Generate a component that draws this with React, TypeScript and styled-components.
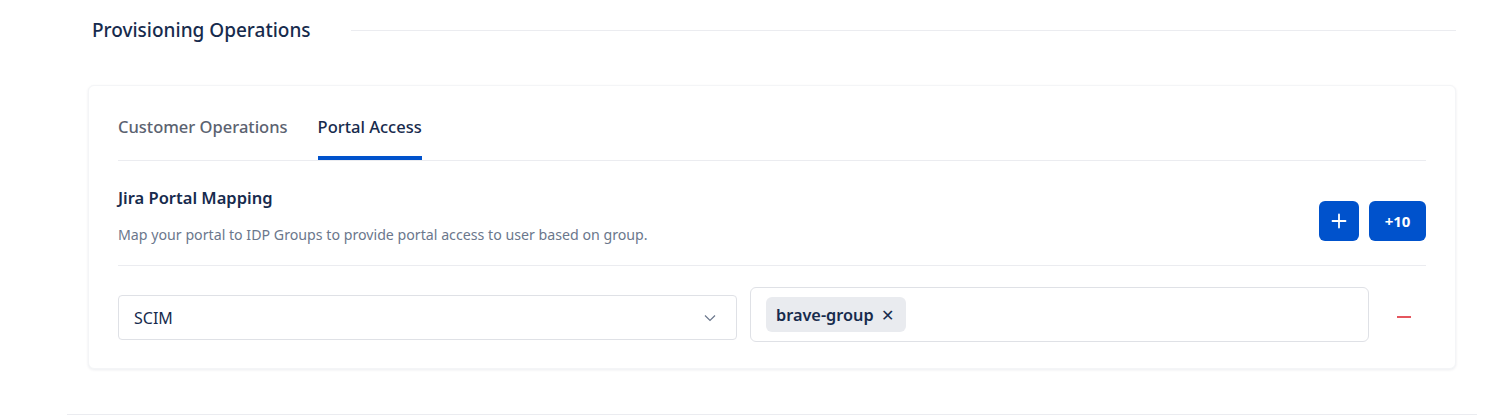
import React, { useState } from "react";
import styled, { createGlobalStyle } from "styled-components";

const Global = createGlobalStyle`
  html, body { margin: 0; padding: 0; background: #ffffff; }
  body { font-family: "Noto Sans", "Open Sans", sans-serif; color: #172b4d; }
  * { box-sizing: border-box; }
`;

const Page = styled.div`
  width: 1493px;
  height: 416px;
  padding: 0 16px 0 67px;
`;

const Section = styled.section`
  border-bottom: 1px solid #ebecf0;
  padding: 0 21px 45px;
`;

const HeadingRow = styled.div`
  display: flex;
  align-items: center;
  gap: 40px;
  height: 60px;
  padding-left: 4px;
  margin-bottom: 25px;
`;

const Heading = styled.h2`
  margin: 0;
  font-size: 19px;
  font-weight: 500;
  color: #172b4d;
  white-space: nowrap;
`;

const HeadingLine = styled.div`
  flex: 1;
  height: 1px;
  background: #ebecf0;
`;

const Card = styled.div`
  border: 1px solid #f4f5f7;
  border-radius: 6px;
  box-shadow: 0 1px 3px rgba(9, 30, 66, 0.08);
  padding: 20px 29px 26px;
  background: #fff;
`;

const TabList = styled.div`
  display: flex;
  gap: 30px;
  border-bottom: 1px solid #ebecf0;
`;

const Tab = styled.button<{ $active?: boolean }>`
  border: none;
  background: none;
  padding: 10px 0 18px;
  font-family: inherit;
  font-size: 16.5px;
  line-height: 22px;
  font-weight: 500;
  color: ${(p) => (p.$active ? "#172b4d" : "#5b6270")};
  border-bottom: 4px solid ${(p) => (p.$active ? "#0052cc" : "transparent")};
  cursor: pointer;
`;

const MappingHeader = styled.div`
  display: flex;
  align-items: center;
  justify-content: space-between;
  padding: 25px 0 20px;
  border-bottom: 1px solid #ebecf0;
`;

const Title = styled.h3`
  margin: 0;
  font-size: 16.5px;
  line-height: 24px;
  font-weight: 600;
  color: #172b4d;
`;

const Description = styled.p`
  margin: 15px 0 0;
  font-size: 14.2px;
  line-height: 20px;
  color: #6b778c;
`;

const Actions = styled.div`
  display: flex;
  gap: 10px;
  margin-top: 10px;
`;

const PrimaryButton = styled.button<{ $wide?: boolean }>`
  height: 40px;
  min-width: ${(p) => (p.$wide ? "57px" : "40px")};
  padding: 0 ${(p) => (p.$wide ? "12px" : "0")};
  border: none;
  border-radius: 6px;
  background: #0052cc;
  color: #fff;
  font-family: inherit;
  font-size: 15px;
  font-weight: 700;
  display: flex;
  align-items: center;
  justify-content: center;
`;

const MappingRow = styled.div`
  display: grid;
  grid-template-columns: 619px 619px 1fr;
  column-gap: 13px;
  align-items: center;
  padding-top: 21px;
`;

const Select = styled.div`
  height: 45px;
  margin-top: 6px;
  border: 1px solid #dfe1e6;
  border-radius: 4px;
  display: flex;
  align-items: center;
  justify-content: space-between;
  padding: 0 20px 0 15px;
  font-size: 16px;
  color: #172b4d;
`;

const MultiSelect = styled.div`
  height: 55px;
  border: 1px solid #dfe1e6;
  border-radius: 6px;
  display: flex;
  align-items: center;
  padding: 0 15px;
`;

const Chip = styled.span`
  display: inline-flex;
  align-items: center;
  gap: 7px;
  height: 35px;
  padding: 0 12px 0 10px;
  border-radius: 6px;
  background: #e9ebef;
  font-size: 16.3px;
  font-weight: 600;
  color: #172b4d;
`;

const ChipClose = styled.span`
  font-size: 16px;
  font-weight: 400;
  line-height: 1;
`;

const RemoveButton = styled.button`
  justify-self: start;
  margin: 4px 0 0 11px;
  border: none;
  background: none;
  padding: 4px;
  display: flex;
  align-items: center;
`;

const PlusIcon = () => (
  <svg width="16" height="16" viewBox="0 0 16 16" fill="none">
    <path d="M8 1.5v13M1.5 8h13" stroke="#fff" strokeWidth="1.8" strokeLinecap="round" />
  </svg>
);

const Chevron = () => (
  <svg width="12" height="8" viewBox="0 0 12 8" fill="none">
    <path d="M1 1.5l5 5 5-5" stroke="#6b778c" strokeWidth="1.2" />
  </svg>
);

const MinusIcon = () => (
  <svg width="14" height="2" viewBox="0 0 14 2">
    <rect width="14" height="2" fill="#e5565e" />
  </svg>
);

export default function App() {
  const [tab, setTab] = useState("portal");
  return (
    <Page>
      <Global />
      <Section>
        <HeadingRow>
          <Heading>Provisioning Operations</Heading>
          <HeadingLine />
        </HeadingRow>
        <Card>
          <TabList>
            <Tab $active={tab === "customer"} onClick={() => setTab("customer")}>
              Customer Operations
            </Tab>
            <Tab $active={tab === "portal"} onClick={() => setTab("portal")}>
              Portal Access
            </Tab>
          </TabList>
          <MappingHeader>
            <div>
              <Title>Jira Portal Mapping</Title>
              <Description>
                Map your portal to IDP Groups to provide portal access to user based on group.
              </Description>
            </div>
            <Actions>
              <PrimaryButton aria-label="Add">
                <PlusIcon />
              </PrimaryButton>
              <PrimaryButton $wide>+10</PrimaryButton>
            </Actions>
          </MappingHeader>
          <MappingRow>
            <Select>
              <span>SCIM</span>
              <Chevron />
            </Select>
            <MultiSelect>
              <Chip>
                brave-group <ChipClose>✕</ChipClose>
              </Chip>
            </MultiSelect>
            <RemoveButton aria-label="Remove">
              <MinusIcon />
            </RemoveButton>
          </MappingRow>
        </Card>
      </Section>
    </Page>
  );
}
